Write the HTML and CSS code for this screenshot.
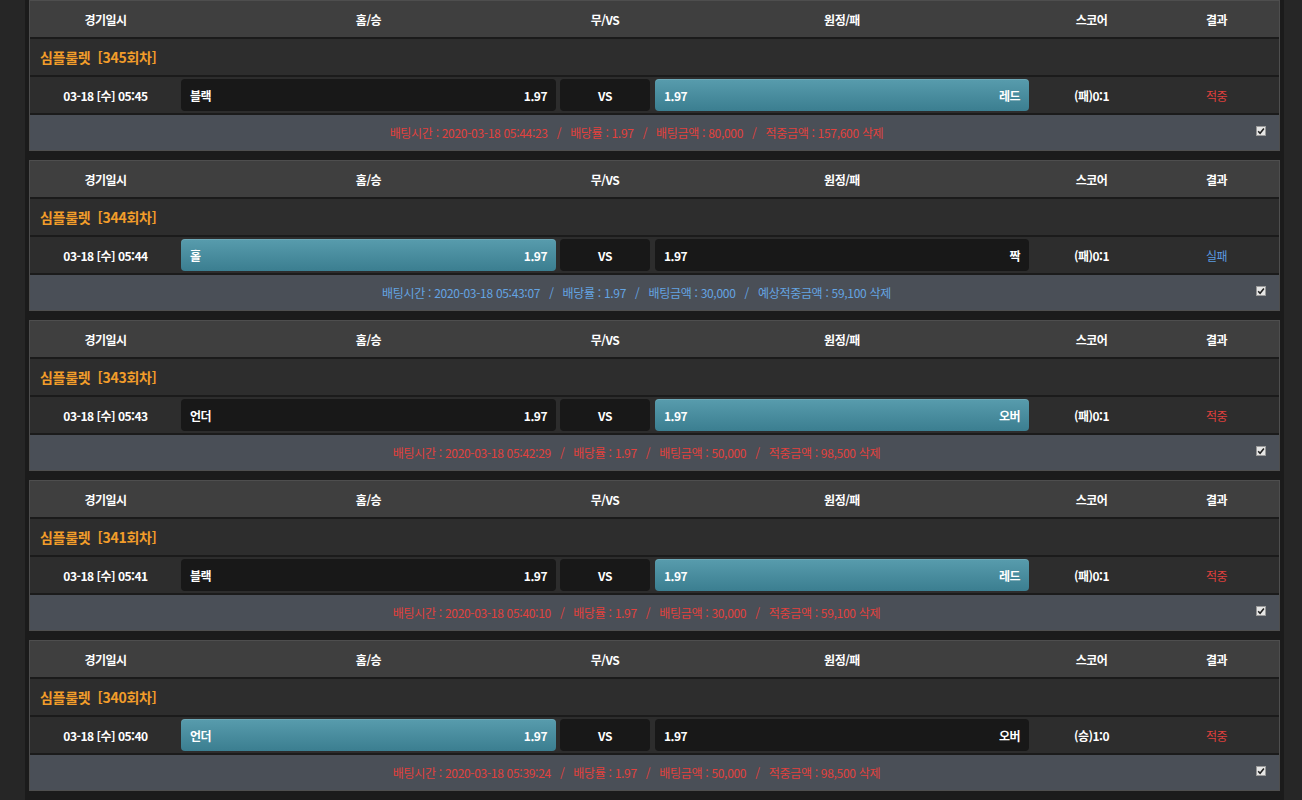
FILE: index.html
```html
<!DOCTYPE html>
<html lang="ko">
<head>
<meta charset="utf-8">
<title>베팅내역</title>
<link rel="stylesheet" href="styles.css">
</head>
<body>
<div class="wrap">

  <div class="card">
    <div class="row head">
      <div class="c-date">경기일시</div><div class="c-home">홈/승</div><div class="c-vs">무/VS</div><div class="c-away">원정/패</div><div class="c-score">스코어</div><div class="c-res">결과</div>
    </div>
    <div class="row title">심플룰렛 &nbsp;[345회차]</div>
    <div class="row bet">
      <div class="c-date">03-18 [수] 05:45</div>
      <div class="c-home box"><span>블랙</span><span>1.97</span></div>
      <div class="c-vs box center">VS</div>
      <div class="c-away box sel"><span>1.97</span><span>레드</span></div>
      <div class="c-score">(패)0:1</div>
      <div class="c-res win">적중</div>
    </div>
    <div class="row foot">
      <div class="info win">배팅시간 : 2020-03-18 05:44:23<i>/</i>배당률 : 1.97<i>/</i>배팅금액 : 80,000<i>/</i>적중금액 : 157,600 삭제</div>
      <div class="chk"><svg width="10" height="10" viewBox="0 0 10 10"><rect x="0.5" y="0.5" width="9" height="9" fill="#e6e6e6" stroke="#9a9a9a"/><path d="M2.2 5.2 L4.1 7.2 L7.9 2.6" fill="none" stroke="#222" stroke-width="1.6"/></svg></div>
    </div>
  </div>

  <div class="card">
    <div class="row head">
      <div class="c-date">경기일시</div><div class="c-home">홈/승</div><div class="c-vs">무/VS</div><div class="c-away">원정/패</div><div class="c-score">스코어</div><div class="c-res">결과</div>
    </div>
    <div class="row title">심플룰렛 &nbsp;[344회차]</div>
    <div class="row bet">
      <div class="c-date">03-18 [수] 05:44</div>
      <div class="c-home box sel"><span>홀</span><span>1.97</span></div>
      <div class="c-vs box center">VS</div>
      <div class="c-away box"><span>1.97</span><span>짝</span></div>
      <div class="c-score">(패)0:1</div>
      <div class="c-res lose">실패</div>
    </div>
    <div class="row foot">
      <div class="info lose">배팅시간 : 2020-03-18 05:43:07<i>/</i>배당률 : 1.97<i>/</i>배팅금액 : 30,000<i>/</i>예상적중금액 : 59,100 삭제</div>
      <div class="chk"><svg width="10" height="10" viewBox="0 0 10 10"><rect x="0.5" y="0.5" width="9" height="9" fill="#e6e6e6" stroke="#9a9a9a"/><path d="M2.2 5.2 L4.1 7.2 L7.9 2.6" fill="none" stroke="#222" stroke-width="1.6"/></svg></div>
    </div>
  </div>

  <div class="card">
    <div class="row head">
      <div class="c-date">경기일시</div><div class="c-home">홈/승</div><div class="c-vs">무/VS</div><div class="c-away">원정/패</div><div class="c-score">스코어</div><div class="c-res">결과</div>
    </div>
    <div class="row title">심플룰렛 &nbsp;[343회차]</div>
    <div class="row bet">
      <div class="c-date">03-18 [수] 05:43</div>
      <div class="c-home box"><span>언더</span><span>1.97</span></div>
      <div class="c-vs box center">VS</div>
      <div class="c-away box sel"><span>1.97</span><span>오버</span></div>
      <div class="c-score">(패)0:1</div>
      <div class="c-res win">적중</div>
    </div>
    <div class="row foot">
      <div class="info win">배팅시간 : 2020-03-18 05:42:29<i>/</i>배당률 : 1.97<i>/</i>배팅금액 : 50,000<i>/</i>적중금액 : 98,500 삭제</div>
      <div class="chk"><svg width="10" height="10" viewBox="0 0 10 10"><rect x="0.5" y="0.5" width="9" height="9" fill="#e6e6e6" stroke="#9a9a9a"/><path d="M2.2 5.2 L4.1 7.2 L7.9 2.6" fill="none" stroke="#222" stroke-width="1.6"/></svg></div>
    </div>
  </div>

  <div class="card">
    <div class="row head">
      <div class="c-date">경기일시</div><div class="c-home">홈/승</div><div class="c-vs">무/VS</div><div class="c-away">원정/패</div><div class="c-score">스코어</div><div class="c-res">결과</div>
    </div>
    <div class="row title">심플룰렛 &nbsp;[341회차]</div>
    <div class="row bet">
      <div class="c-date">03-18 [수] 05:41</div>
      <div class="c-home box"><span>블랙</span><span>1.97</span></div>
      <div class="c-vs box center">VS</div>
      <div class="c-away box sel"><span>1.97</span><span>레드</span></div>
      <div class="c-score">(패)0:1</div>
      <div class="c-res win">적중</div>
    </div>
    <div class="row foot">
      <div class="info win">배팅시간 : 2020-03-18 05:40:10<i>/</i>배당률 : 1.97<i>/</i>배팅금액 : 30,000<i>/</i>적중금액 : 59,100 삭제</div>
      <div class="chk"><svg width="10" height="10" viewBox="0 0 10 10"><rect x="0.5" y="0.5" width="9" height="9" fill="#e6e6e6" stroke="#9a9a9a"/><path d="M2.2 5.2 L4.1 7.2 L7.9 2.6" fill="none" stroke="#222" stroke-width="1.6"/></svg></div>
    </div>
  </div>

  <div class="card">
    <div class="row head">
      <div class="c-date">경기일시</div><div class="c-home">홈/승</div><div class="c-vs">무/VS</div><div class="c-away">원정/패</div><div class="c-score">스코어</div><div class="c-res">결과</div>
    </div>
    <div class="row title">심플룰렛 &nbsp;[340회차]</div>
    <div class="row bet">
      <div class="c-date">03-18 [수] 05:40</div>
      <div class="c-home box sel"><span>언더</span><span>1.97</span></div>
      <div class="c-vs box center">VS</div>
      <div class="c-away box"><span>1.97</span><span>오버</span></div>
      <div class="c-score">(승)1:0</div>
      <div class="c-res win">적중</div>
    </div>
    <div class="row foot">
      <div class="info win">배팅시간 : 2020-03-18 05:39:24<i>/</i>배당률 : 1.97<i>/</i>배팅금액 : 50,000<i>/</i>적중금액 : 98,500 삭제</div>
      <div class="chk"><svg width="10" height="10" viewBox="0 0 10 10"><rect x="0.5" y="0.5" width="9" height="9" fill="#e6e6e6" stroke="#9a9a9a"/><path d="M2.2 5.2 L4.1 7.2 L7.9 2.6" fill="none" stroke="#222" stroke-width="1.6"/></svg></div>
    </div>
  </div>

</div>
</body>
</html>
```
FILE: styles.css
```css
html, body {
  margin: 0;
  padding: 0;
  background: #262626;
  font-family: "Noto Sans CJK KR", "Noto Sans", sans-serif;
  font-size: 12px;
  color: #fff;
}

.wrap {
  margin: 0 0 0 25px;
  width: 1251px;
  padding: 0 4px 20px 4px;
  background: #1b1b1b;
  min-height: 820px;
}

.card {
  border: 1px solid #4e4e4e;
  background: #1b1b1b;
  margin-bottom: 9px;
}

.row {
  display: flex;
  align-items: center;
  height: 36px;
  border-bottom: 2px solid #1b1b1b;
}

.row.foot {
  border-bottom: 0;
  height: 35px;
  background: #4a4f57;
}

.head {
  background: #3f3f3f;
  font-weight: bold;
  letter-spacing: -0.5px;
}

.head > div {
  text-align: center;
}

.title {
  background: #2d2d2d;
  color: #f29d2a;
  font-weight: bold;
  font-size: 14px;
  padding-left: 10px;
  letter-spacing: -0.3px;
}

.bet {
  background: #2d2d2d;
  font-weight: bold;
  letter-spacing: -0.5px;
}

.c-date { width: 151px; text-align: center; }
.c-home { width: 375px; }
.c-vs { width: 90px; margin-left: 4px; }
.c-away { width: 374px; margin-left: 5px; }
.c-score { width: 125px; text-align: center; }
.c-res { flex: 1; text-align: center; }

.box {
  box-sizing: border-box;
  height: 32px;
  border-radius: 4px;
  background: #181818;
  display: flex;
  align-items: center;
  justify-content: space-between;
  padding: 0 9px;
}

.box.center {
  justify-content: center;
}

.box.sel {
  background: linear-gradient(#589cad, #3b7e90);
  box-shadow: inset 0 1px 0 rgba(255,255,255,0.12);
}

.c-res.win { color: #e0403c; font-weight: normal; }
.c-res.lose { color: #5b9be0; font-weight: normal; }

.info {
  flex: 1;
  text-align: center;
  letter-spacing: -0.3px;
}

.info i {
  font-style: normal;
  margin: 0 9px;
}

.info.win { color: #e2413d; }
.info.lose { color: #64a4e2; }

.chk {
  width: 36px;
  display: flex;
  justify-content: center;
  align-items: center;
  padding-bottom: 4px;
}

.chk svg { display: block; }
```
